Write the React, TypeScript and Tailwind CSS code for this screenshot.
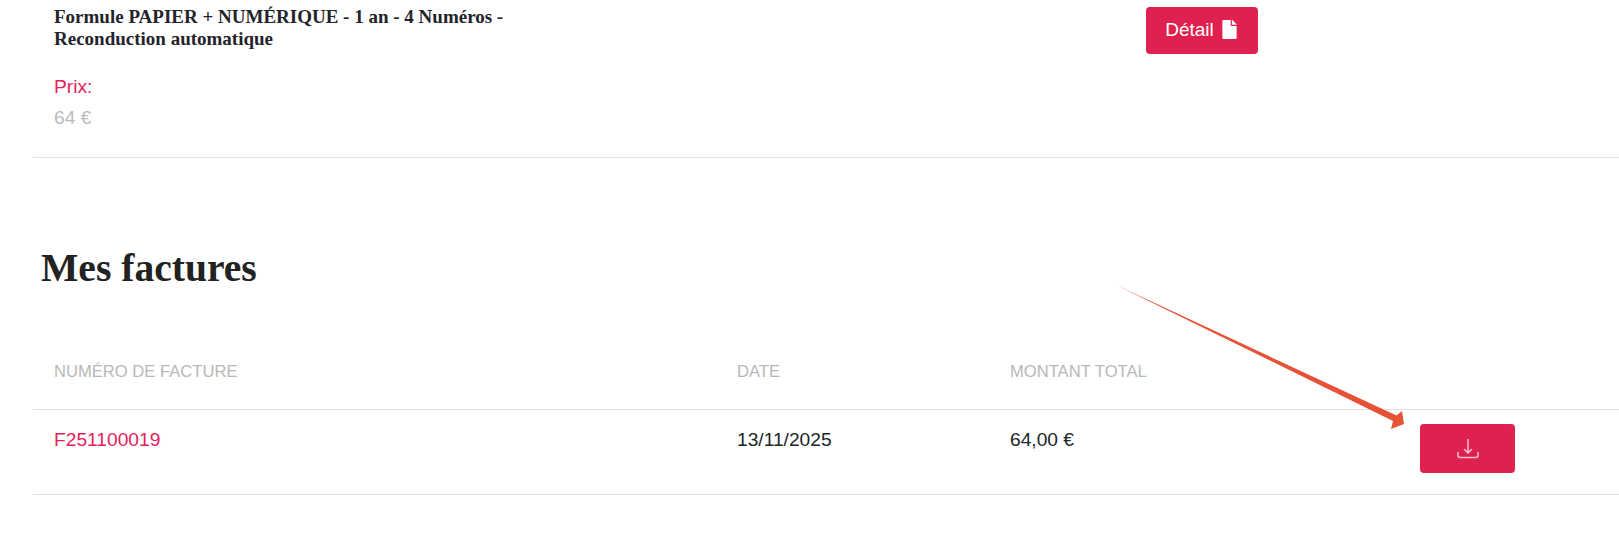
import { FaFile } from 'react-icons/fa'

const serif = "font-['Liberation_Serif',serif]"

export default function App() {
  return (
    <div className="relative h-[554px] overflow-hidden bg-white pl-[33px] font-['Liberation_Sans',sans-serif] text-[#212529]">
      <div className="flex h-[158px] border-b border-[#dee2e6]">
        <div className="w-[1113px] pl-[21px] pt-[6px]">
          <h3 className={`${serif} w-[470px] text-[19px] font-bold leading-[22px] text-[#23232b]`}>
            Formule PAPIER + NUMÉRIQUE - 1 an - 4 Numéros - Reconduction automatique
          </h3>
          <p className="mt-[23px] text-[19.2px] leading-[27px] text-[#e6215a]">Prix:</p>
          <p className="mt-[4px] text-[19.2px] leading-[27px] text-[#bbbbbb]">64 €</p>
        </div>
        <div className="pt-[7px]">
          <button className="flex h-[47px] w-[112px] items-center justify-center gap-[6px] rounded-[4px] bg-[#e0204e] text-[19px] text-white">
            Détail
            <FaFile size={19} className="-mt-[3px]" />
          </button>
        </div>
      </div>

      <h2 className={`${serif} mt-[88px] pl-[8px] text-[39.6px] font-bold leading-[44px] text-[#222222]`}>Mes factures</h2>

      <div className="mt-[59px] grid grid-cols-[683px_273px_410px_1fr] border-b border-[#dee2e6] pb-[26px] pl-[21px] pt-[12px] text-[16.6px] leading-[22px] text-[#b8b8b8]">
        <span>NUMÉRO DE FACTURE</span>
        <span>DATE</span>
        <span>MONTANT TOTAL</span>
        <span />
      </div>

      <div className="grid h-[85px] grid-cols-[683px_273px_410px_1fr] border-b border-[#dee2e6] pl-[21px] text-[19.2px]">
        <a className="pt-[16px] leading-[27px] text-[#e6215a]">F251100019</a>
        <span className="pt-[16px] leading-[27px]">13/11/2025</span>
        <span className="pt-[16px] leading-[27px]">64,00 €</span>
        <div className="pt-[14px]">
          <button className="flex h-[49px] w-[95px] items-center justify-center rounded-[4px] bg-[#e0204e]">
            <svg width="24" height="24" viewBox="0 0 24 24" fill="none" stroke="#f9c3d0" strokeWidth="1.5" strokeLinecap="round">
              <path d="M12 2.5 V15.5" />
              <path d="M8.5 12.5 L12 16 L15.5 12.5" />
              <path d="M2 15.5 V18.5 Q2 20.5 4 20.5 H20 Q22 20.5 22 18.5 V15.5" />
            </svg>
          </button>
        </div>
      </div>

      {/* annotation arrow drawn over the page */}
      <svg className="pointer-events-none absolute left-0 top-0" width="1619" height="554">
        <path d="M1116 285 L1396.5 415.5 L1402 411 L1404 424 L1391 429 L1393 421 Z" fill="#e65236" />
      </svg>
    </div>
  )
}
